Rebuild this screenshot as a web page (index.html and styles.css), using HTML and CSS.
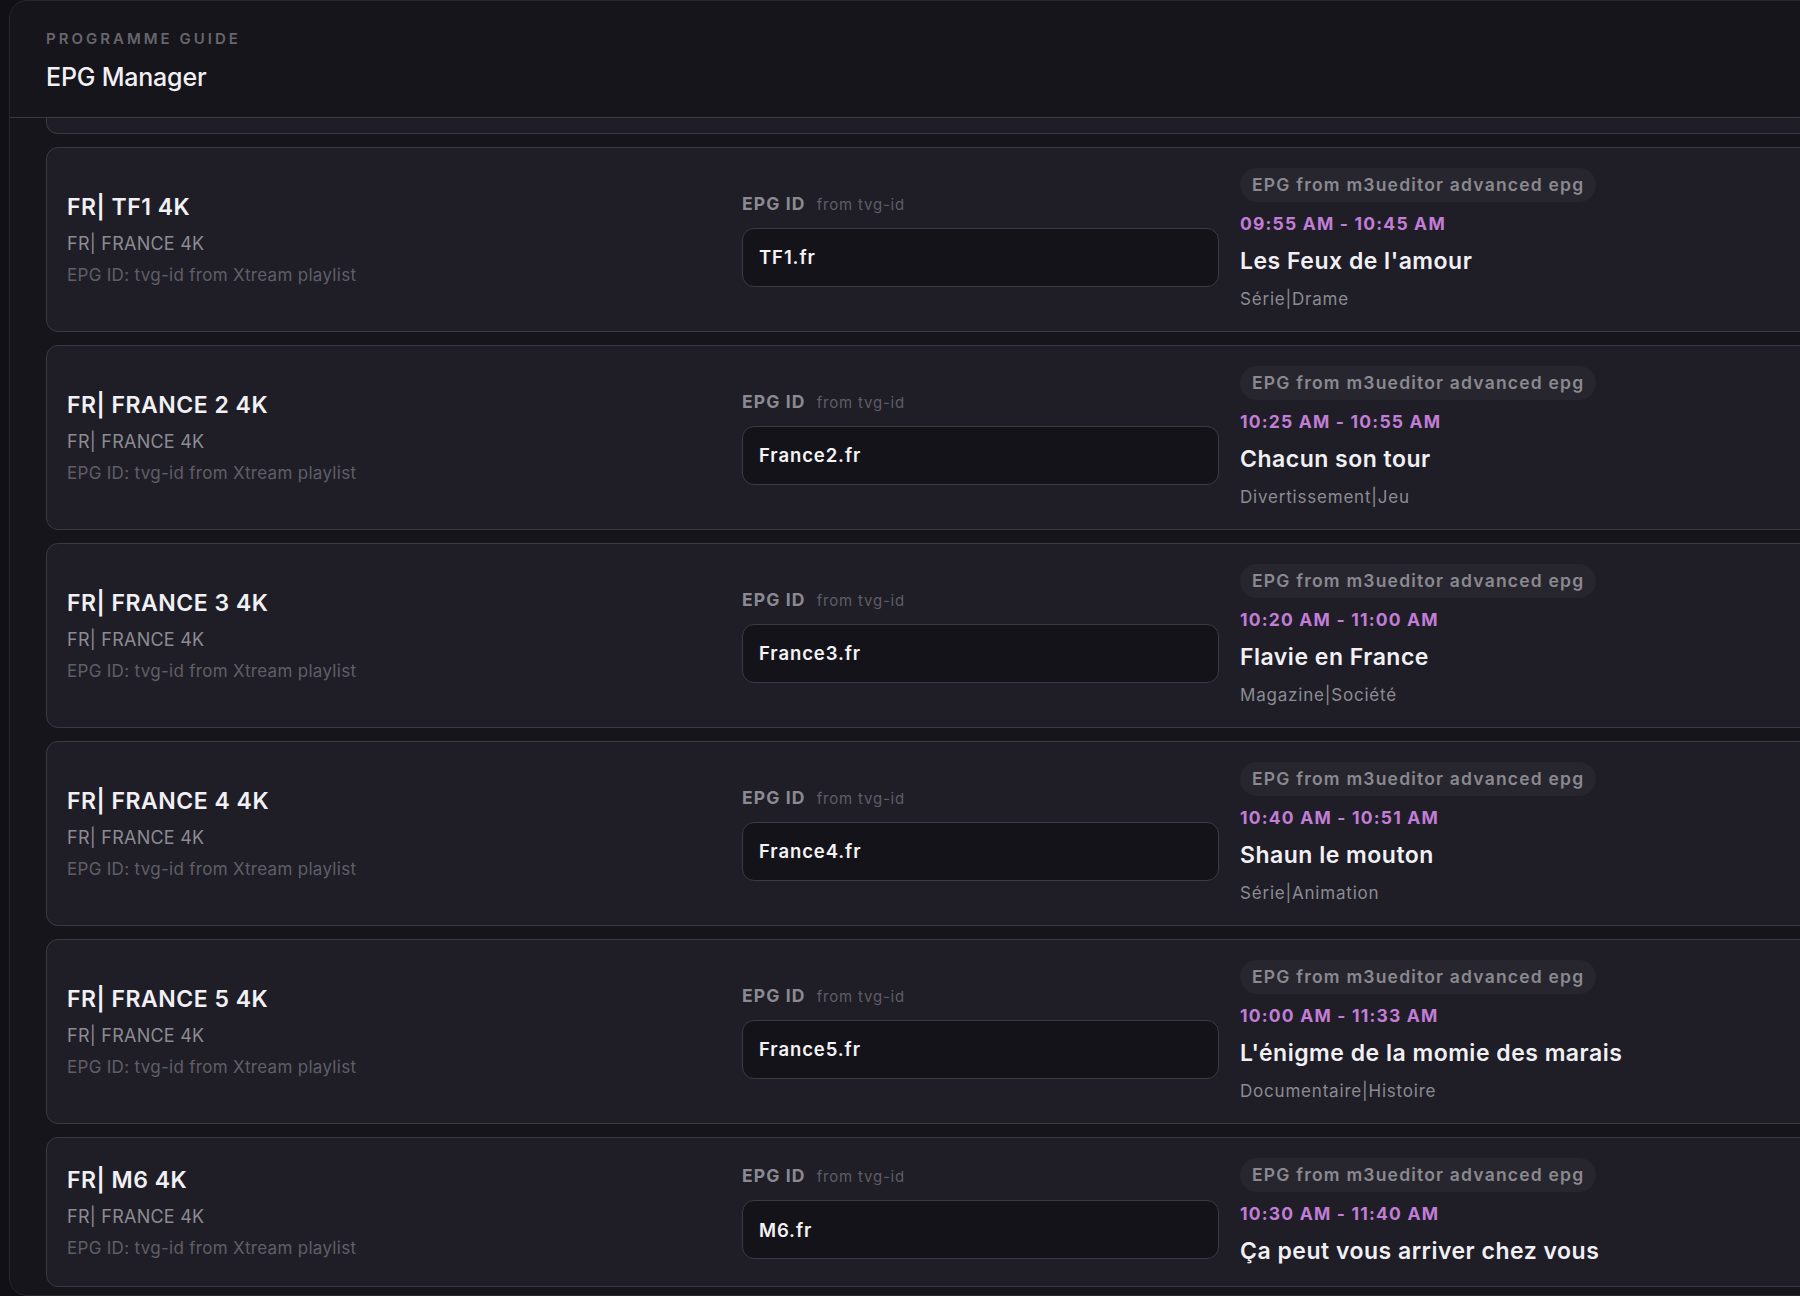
FILE: index.html
```html
<!DOCTYPE html>
<html lang="en">
<head>
  <meta charset="UTF-8">
  <meta name="viewport" content="width=device-width, initial-scale=1.0">
  <title>EPG Manager</title>
  <link rel="stylesheet" href="styles.css">
</head>
<body>
  <div class="panel">
    <header class="panel-header">
      <div class="eyebrow">Programme guide</div>
      <h1>EPG Manager</h1>
    </header>

    <div class="channel-list">
      <!-- previous row, scrolled up under the header -->
      <div class="channel-tail"></div>

      <div class="channel">
        <div class="channel-info">
          <div class="channel-name">FR| TF1 4K</div>
          <div class="channel-group">FR| FRANCE 4K</div>
          <div class="channel-source">EPG ID: tvg-id from Xtream playlist</div>
        </div>
        <div class="epg-field">
          <label class="field-label">EPG ID <span>from tvg-id</span></label>
          <input class="epg-input" type="text" value="TF1.fr">
        </div>
        <div class="now-playing">
          <span class="source-badge">EPG from m3ueditor advanced epg</span>
          <div class="time">09:55 AM - 10:45 AM</div>
          <div class="programme-title">Les Feux de l'amour</div>
          <div class="genre">Série|Drame</div>
        </div>
      </div>

      <div class="channel">
        <div class="channel-info">
          <div class="channel-name">FR| FRANCE 2 4K</div>
          <div class="channel-group">FR| FRANCE 4K</div>
          <div class="channel-source">EPG ID: tvg-id from Xtream playlist</div>
        </div>
        <div class="epg-field">
          <label class="field-label">EPG ID <span>from tvg-id</span></label>
          <input class="epg-input" type="text" value="France2.fr">
        </div>
        <div class="now-playing">
          <span class="source-badge">EPG from m3ueditor advanced epg</span>
          <div class="time">10:25 AM - 10:55 AM</div>
          <div class="programme-title">Chacun son tour</div>
          <div class="genre">Divertissement|Jeu</div>
        </div>
      </div>

      <div class="channel">
        <div class="channel-info">
          <div class="channel-name">FR| FRANCE 3 4K</div>
          <div class="channel-group">FR| FRANCE 4K</div>
          <div class="channel-source">EPG ID: tvg-id from Xtream playlist</div>
        </div>
        <div class="epg-field">
          <label class="field-label">EPG ID <span>from tvg-id</span></label>
          <input class="epg-input" type="text" value="France3.fr">
        </div>
        <div class="now-playing">
          <span class="source-badge">EPG from m3ueditor advanced epg</span>
          <div class="time">10:20 AM - 11:00 AM</div>
          <div class="programme-title">Flavie en France</div>
          <div class="genre">Magazine|Société</div>
        </div>
      </div>

      <div class="channel">
        <div class="channel-info">
          <div class="channel-name">FR| FRANCE 4 4K</div>
          <div class="channel-group">FR| FRANCE 4K</div>
          <div class="channel-source">EPG ID: tvg-id from Xtream playlist</div>
        </div>
        <div class="epg-field">
          <label class="field-label">EPG ID <span>from tvg-id</span></label>
          <input class="epg-input" type="text" value="France4.fr">
        </div>
        <div class="now-playing">
          <span class="source-badge">EPG from m3ueditor advanced epg</span>
          <div class="time">10:40 AM - 10:51 AM</div>
          <div class="programme-title">Shaun le mouton</div>
          <div class="genre">Série|Animation</div>
        </div>
      </div>

      <div class="channel">
        <div class="channel-info">
          <div class="channel-name">FR| FRANCE 5 4K</div>
          <div class="channel-group">FR| FRANCE 4K</div>
          <div class="channel-source">EPG ID: tvg-id from Xtream playlist</div>
        </div>
        <div class="epg-field">
          <label class="field-label">EPG ID <span>from tvg-id</span></label>
          <input class="epg-input" type="text" value="France5.fr">
        </div>
        <div class="now-playing">
          <span class="source-badge">EPG from m3ueditor advanced epg</span>
          <div class="time">10:00 AM - 11:33 AM</div>
          <div class="programme-title">L'énigme de la momie des marais</div>
          <div class="genre">Documentaire|Histoire</div>
        </div>
      </div>

      <div class="channel">
        <div class="channel-info">
          <div class="channel-name">FR| M6 4K</div>
          <div class="channel-group">FR| FRANCE 4K</div>
          <div class="channel-source">EPG ID: tvg-id from Xtream playlist</div>
        </div>
        <div class="epg-field">
          <label class="field-label">EPG ID <span>from tvg-id</span></label>
          <input class="epg-input" type="text" value="M6.fr">
        </div>
        <div class="now-playing">
          <span class="source-badge">EPG from m3ueditor advanced epg</span>
          <div class="time">10:30 AM - 11:40 AM</div>
          <div class="programme-title">Ça peut vous arriver chez vous</div>
        </div>
      </div>
    </div>
  </div>
</body>
</html>
```

FILE: styles.css
```css
body {
  margin: 0;
  height: 100vh;
  overflow: hidden;
  background: #111016;
  font-family: 'Inter', 'Noto Sans', sans-serif;
  color: #f0eff4;
}

.panel {
  box-sizing: border-box;
  width: 2000px;
  height: 1296px;
  margin-left: 9px;
  background: #16151b;
  border: 1px solid #28272e;
  border-radius: 18px;
  overflow: hidden;
}

.panel-header {
  padding: 28px 36px 24px;
  border-bottom: 1px solid #3b3a42;
}

.eyebrow {
  font-size: 15px;
  line-height: 20px;
  font-weight: 600;
  letter-spacing: 0.2em;
  text-transform: uppercase;
  color: #67666e;
}

.panel-header h1 {
  margin: 12px 0 0;
  font-size: 25px;
  line-height: 32px;
  font-weight: 500;
  letter-spacing: -0.2px;
  color: #f1f0f5;
}

.channel-list {
  display: flex;
  flex-direction: column;
  gap: 13px;
  padding: 0 36px;
}

.channel-tail {
  height: 15px;
  background: #1f1e26;
  border: 1px solid #3b3a42;
  border-top: none;
  border-radius: 0 0 12px 12px;
}

.channel {
  display: grid;
  grid-template-columns: 654px 477px 1fr;
  column-gap: 21px;
  align-items: center;
  padding: 20px;
  background: #1f1e26;
  border: 1px solid #3b3a42;
  border-radius: 12px;
}

.channel-name {
  font-size: 23px;
  line-height: 30px;
  font-weight: 600;
  letter-spacing: 0.5px;
  color: #f1f0f5;
  margin-bottom: 10px;
}

.channel-group {
  font-size: 18px;
  line-height: 24px;
  letter-spacing: 0.25px;
  color: #8c8b93;
  margin-bottom: 7px;
}

.channel-source {
  font-size: 17px;
  line-height: 24px;
  letter-spacing: 0.3px;
  color: #5f5e67;
}

.field-label {
  display: block;
  font-size: 17.5px;
  line-height: 22px;
  font-weight: 700;
  letter-spacing: 1.1px;
  color: #8b8a92;
  margin-bottom: 12px;
}

.field-label span {
  margin-left: 6px;
  font-size: 15px;
  font-weight: 400;
  letter-spacing: 0.8px;
  color: #5e5d66;
}

.epg-input {
  box-sizing: border-box;
  width: 100%;
  height: 59px;
  padding: 0 16px;
  background: #141319;
  border: 1px solid #3c3b43;
  border-radius: 12px;
  font-family: inherit;
  font-size: 18.5px;
  font-weight: 600;
  letter-spacing: 0.9px;
  color: #f4f3f7;
  outline: none;
}

.now-playing {
  display: flex;
  flex-direction: column;
  align-items: flex-start;
}

.source-badge {
  height: 34px;
  line-height: 34px;
  padding: 0 12px;
  border-radius: 17px;
  background: #27262e;
  font-size: 17.5px;
  font-weight: 600;
  letter-spacing: 1.2px;
  color: #8a8990;
  margin-bottom: 10px;
}

.time {
  font-size: 17.5px;
  line-height: 24px;
  font-weight: 700;
  letter-spacing: 1.2px;
  color: #c27dd8;
  margin-bottom: 10px;
}

.programme-title {
  font-size: 23px;
  line-height: 30px;
  font-weight: 600;
  letter-spacing: 0.5px;
  color: #f1f0f5;
}

.genre {
  margin-top: 11px;
  font-size: 17px;
  line-height: 24px;
  letter-spacing: 0.8px;
  color: #8c8b93;
}
```
